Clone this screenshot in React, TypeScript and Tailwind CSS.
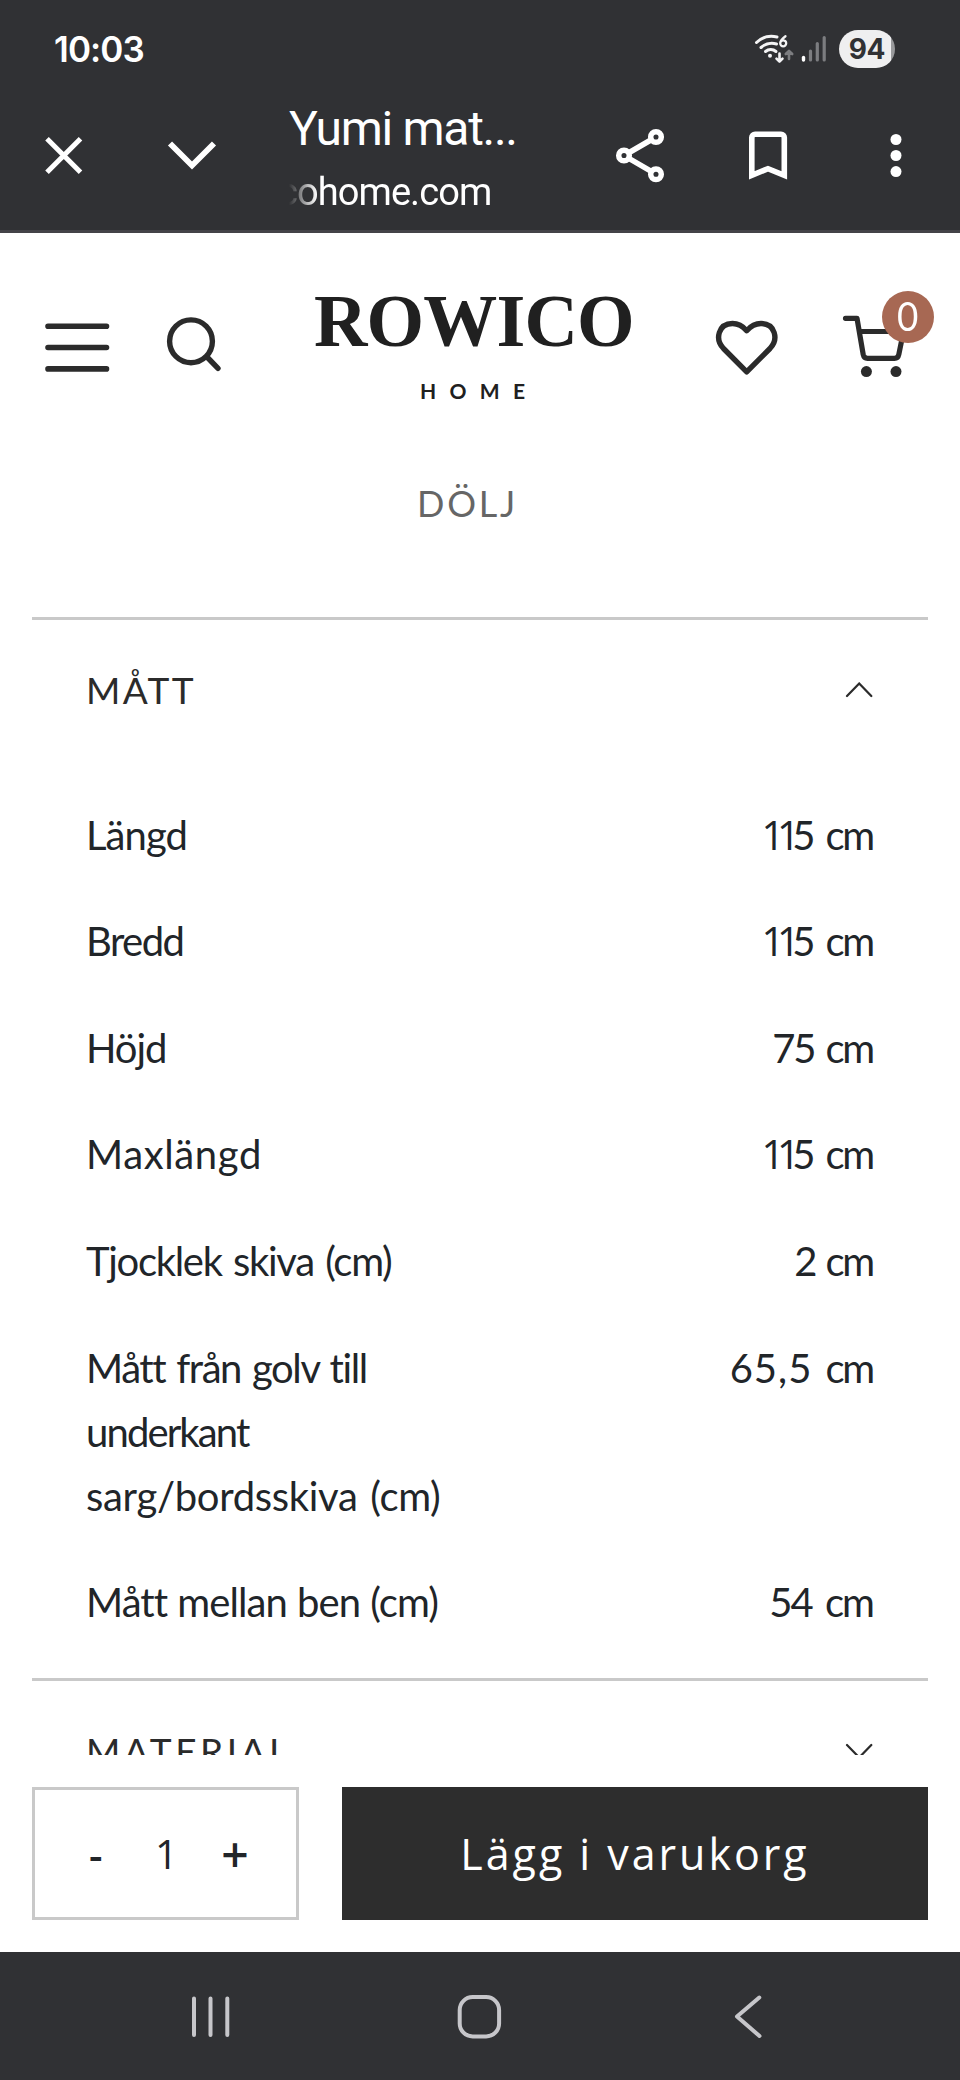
import type { ReactNode } from 'react';

const measurements: { label: ReactNode; labelClass: string; value: ReactNode; valueClass: string }[] = [
  { label: 'Längd', labelClass: 'tracking-[-0.94px]', value: <NarrowOnes />, valueClass: 'tracking-[-2.2px] [word-spacing:4px]' },
  { label: 'Bredd', labelClass: 'tracking-[-1.54px]', value: <NarrowOnes />, valueClass: 'tracking-[-2.2px] [word-spacing:4px]' },
  { label: 'Höjd', labelClass: 'tracking-[-1.07px]', value: '75 cm', valueClass: 'tracking-[-2.2px] [word-spacing:3px]' },
  { label: 'Maxlängd', labelClass: 'tracking-[0.64px]', value: <NarrowOnes />, valueClass: 'tracking-[-2.2px] [word-spacing:4px]' },
  { label: 'Tjocklek skiva (cm)', labelClass: 'tracking-[-1.3px] [word-spacing:2.4px]', value: '2 cm', valueClass: 'tracking-[-2.2px] [word-spacing:2px]' },
  {
    label: (
      <>
        <span className="tracking-[-1.4px] [word-spacing:2.1px]">Mått från golv till</span>
        <br />
        <span className="tracking-[-1.87px]">underkant</span>
        <br />
        <span className="tracking-[-0.3px] [word-spacing:2.7px]">sarg/bordsskiva (cm)</span>
      </>
    ),
    labelClass: '',
    value: (
      <>
        <span className="tracking-[1px]">65,5</span> cm
      </>
    ),
    valueClass: 'tracking-[-2.2px] [word-spacing:5px]',
  },
  { label: 'Mått mellan ben (cm)', labelClass: 'tracking-[-0.9px] [word-spacing:0.7px]', value: '54 cm', valueClass: 'tracking-[-2px] [word-spacing:5px]' },
];

function NarrowOnes() {
  return (
    <>
      <span className="font-['Open_Sans',sans-serif] tracking-[-7.5px]">11</span>5 cm
    </>
  );
}

function StatusBar() {
  return (
    <div className="flex h-[98px] items-center pr-[65px] pl-[54px] text-white">
      <span className="font-[Inter,sans-serif] text-[35px] leading-[44px] font-semibold tracking-[-0.91px]">10:03</span>
      <svg className="ml-auto h-[34px] w-[74px]" viewBox="754 32 74 34" fill="none" strokeLinecap="round">
        <g stroke="#f4f4f5" strokeWidth="3">
          <path d="M756.5 42.5C763 36.3 770 35.3 777 37" />
          <path d="M761 47.5C766 43.3 771 42.5 776.5 44" />
          <path d="M765.5 51.5C768.5 48.9 773 48.9 776 51.5" />
          <path d="M779.5 53.5v8M776.5 58.7l3 3 3-3" strokeWidth="2.6" strokeLinejoin="round" />
        </g>
        <circle cx="770" cy="55.8" r="2" fill="#f4f4f5" />
        <path d="M785.5 36.3C782.5 38.5 780.3 40.8 780.2 43.2M786.2 43.3a3 3 0 1 1-6 0a3 3 0 1 1 6 0Z" stroke="#f4f4f5" strokeWidth="2.3" />
        <path d="M789 59v-8M785.8 54l3.2-3.2 3.2 3.2" stroke="#7c7d80" strokeWidth="2.6" strokeLinejoin="round" />
        <path d="M803.5 57.5v2.5" stroke="#fff" strokeWidth="3.4" />
        <path d="M810.5 51v9M817.3 43.5v16.5M824.2 37.5v22.5" stroke="#7c7d80" strokeWidth="3.2" />
      </svg>
      <span className="ml-[11px] flex h-[38px] w-14 items-center justify-center rounded-full bg-[linear-gradient(to_right,#efeff0_52px,#98999b_52px)] font-[Inter,sans-serif] text-[28px] leading-[38px] font-bold tracking-[-0.2px] text-[#303134]">
        94
      </span>
    </div>
  );
}

function BrowserBar() {
  return (
    <div className="flex h-[132px] items-start text-white">
      <svg className="mt-[26px] ml-11 h-16 w-10 shrink-0" viewBox="44 124 40 64" fill="none" stroke="currentColor" strokeWidth="5">
        <path d="M47 138.800L80.500 172.300M80.500 138.800L47 172.300" />
      </svg>
      <svg className="mt-[26px] ml-[82px] h-16 w-[52px] shrink-0" viewBox="166 124 52 64" fill="none" stroke="currentColor" strokeWidth="5.800">
        <path d="M170 143.500L192 165.500L214 143.500" />
      </svg>
      <div className="mt-[3px] ml-[71px] w-[230px] shrink-0 font-[Roboto,sans-serif]">
        <div className="text-[48px] leading-[56px] tracking-[-1.3px] whitespace-nowrap">Yumi mat...</div>
        <div className="mt-[11px] overflow-hidden [mask-image:linear-gradient(to_right,transparent,black_28px)]">
          <div className="-ml-[11px] text-[38px] leading-[48px] tracking-[-0.92px] whitespace-nowrap">cohome.com</div>
        </div>
      </div>
      <svg className="mt-[26px] ml-[95px] h-16 w-[52px] shrink-0" viewBox="614 124 52 64" fill="none" stroke="currentColor" strokeWidth="5.500">
        <path d="M656 137L624 155.500L656 174.200" />
        <g fill="#303134">
          <circle cx="656" cy="137" r="5.300" />
          <circle cx="624" cy="155.500" r="5.300" />
          <circle cx="656" cy="174.200" r="5.300" />
        </g>
      </svg>
      <svg className="mt-[26px] ml-20 h-16 w-11 shrink-0" viewBox="746 124 44 64" fill="none" stroke="currentColor" strokeWidth="5.600">
        <path d="M751.800 175.300V137.500a3.300 3.300 0 0 1 3.300-3.300H781a3.300 3.300 0 0 1 3.300 3.300V175.300L768 168.700Z" />
      </svg>
      <svg className="mt-[26px] ml-[98px] h-16 w-4 shrink-0" viewBox="888 124 16 64" fill="currentColor">
        <circle cx="896" cy="139.500" r="5.500" />
        <circle cx="896" cy="155.500" r="5.500" />
        <circle cx="896" cy="171.600" r="5.500" />
      </svg>
    </div>
  );
}

function SiteHeader() {
  return (
    <header className="flex h-[228px] items-center text-[#2b2b2b]">
      <svg className="ml-11 h-16 w-[66px] shrink-0" viewBox="44 315 66 64" fill="none" stroke="currentColor" strokeWidth="5.600" strokeLinecap="round">
        <path d="M48 326.300H106.500M48 347.500H106.500M48 368.900H106.500" />
      </svg>
      <svg className="ml-14 h-16 w-[56px] shrink-0" viewBox="166 315 56 64" fill="none" stroke="currentColor" strokeWidth="5.400" strokeLinecap="round">
        <circle cx="191" cy="341.300" r="21.400" />
        <path d="M208 358L218 368.300" />
      </svg>
      <div className="ml-[92px] flex w-[320px] shrink-0 flex-col text-[#202020]">
        <span className="font-['Liberation_Serif',serif] text-[74px] leading-[60px] font-bold tracking-[-0.85px] whitespace-nowrap">ROWICO</span>
        <span className="mt-7 pl-[106px] font-[Lato,sans-serif] text-[21px] leading-6 font-bold tracking-[13.34px]">HOME</span>
      </div>
      <svg className="ml-20 h-16 w-[66px] shrink-0" viewBox="714 315 66 64" fill="none" stroke="currentColor" strokeWidth="5.400" strokeLinejoin="round" strokeLinecap="round">
        <path d="M746.700 371.800L723.500 348.500C714.500 339 718.500 323.700 732.500 323.500C739.500 323.500 743.500 327 746.700 330.700C750 327 754 323.500 761 323.500C775 323.700 779 339 770 348.500Z" />
      </svg>
      <div className="relative ml-[62px] h-16 w-16 shrink-0">
        <svg className="h-16 w-16" viewBox="842 315 64 64" fill="none" stroke="currentColor" strokeWidth="5.200" strokeLinejoin="round" strokeLinecap="round">
          <path d="M845.500 318.300H857L863.200 354.500Q864 358.300 867.500 358.300H894.500Q898 358.300 898.800 354.500L903.500 331.500H860" />
          <g fill="currentColor" stroke="none">
            <circle cx="866.400" cy="371.600" r="5.500" />
            <circle cx="896" cy="371.600" r="5.500" />
          </g>
        </svg>
        <span className="absolute top-[-24px] left-10 flex size-[52px] items-center justify-center rounded-full bg-[#a76853] font-[Lato,sans-serif] text-[40px] leading-[52px] text-white">
          <span className="-mt-[3px] scale-x-[.92]">0</span>
        </span>
      </div>
    </header>
  );
}

function SectionTitle({ text, open, tracking }: { text: string; open: boolean; tracking: string }) {
  return (
    <div className="flex h-[141px] items-center justify-between pr-[55px] pb-px pl-[54px] text-[#2b2b2b]">
      <span className={`text-[37px] leading-[44px] ${tracking}`}>{text}</span>
      <svg className="h-4 w-7" viewBox="0 0 28 16" fill="none" stroke="currentColor" strokeWidth="2.2" strokeLinecap="round">
        <path d={open ? 'M2 14L14.200 1.500L26.300 14' : 'M2 2L14.200 14.500L26.300 2'} />
      </svg>
    </div>
  );
}

export default function App() {
  return (
    <div className="flex h-[2080px] w-[960px] flex-col overflow-hidden bg-white font-[Lato,sans-serif]">
      <div className="shrink-0 border-b-[3px] border-[#444348] bg-[#303134]">
        <StatusBar />
        <BrowserBar />
      </div>

      <div className="flex h-[1522px] shrink-0 flex-col overflow-hidden [&>*]:shrink-0">
        <SiteHeader />
        <button className="mb-[72px] h-[84px] w-full pr-[25px] text-[36px] leading-[44px] tracking-[2.77px] text-[#666]">DÖLJ</button>

        <section className="mx-8 border-t-[3px] border-[#c9c9c9]">
          <SectionTitle text="MÅTT" open tracking="tracking-[2.4px]" />
          <dl className="flex flex-col gap-[42.67px] pt-[41.5px] pr-[55px] pb-[43.5px] pl-[54px] text-[40px] leading-[64px] text-[#212529]">
            {measurements.map((m, i) => (
              <div key={i} className="flex justify-between whitespace-nowrap">
                <dt className={m.labelClass}>{m.label}</dt>
                <dd className={m.valueClass}>{m.value}</dd>
              </div>
            ))}
          </dl>
        </section>

        <section className="mx-8 border-t-[3px] border-[#c9c9c9]">
          <SectionTitle text="MATERIAL" open={false} tracking="tracking-[3.5px]" />
        </section>
      </div>

      <div className="flex h-[197px] shrink-0 gap-[43px] px-8 pt-8">
        <div className="flex h-[133px] w-[267px] shrink-0 items-center border-[3px] border-[#c9c9c9] font-['Open_Sans',sans-serif] text-[#212529]">
          <button className="ml-[54px] w-4 text-left text-[42px] leading-[60px] font-semibold">-</button>
          <span className="ml-[50px] w-6 text-[40px] leading-[60px]">1</span>
          <button className="ml-[42px] w-7 text-[48px] leading-[60px] font-semibold">+</button>
        </div>
        <button className="h-[133px] w-[586px] bg-[#2d2d2d] font-['Open_Sans',sans-serif] text-[43px] leading-[60px] tracking-[2.96px] text-white">
          Lägg i varukorg
        </button>
      </div>

      <nav className="flex h-32 shrink-0 items-center bg-[#303134] text-[#c6c6ca]">
        <svg className="ml-[188px] h-12 w-11" viewBox="188 1992 44 48" stroke="currentColor" strokeWidth="4" strokeLinecap="round">
          <path d="M194 1998.500V2035M210.500 1998.500V2035M227.300 1998.500V2035" />
        </svg>
        <svg className="ml-[223px] h-12 w-12" viewBox="455 1992 48 48" fill="none" stroke="currentColor" strokeWidth="4">
          <rect x="459.700" y="1997" width="39.400" height="39.400" rx="13" />
        </svg>
        <svg className="ml-[229px] h-12 w-8" viewBox="732 1992 32 48" fill="none" stroke="currentColor" strokeWidth="4" strokeLinecap="round" strokeLinejoin="round">
          <path d="M759.300 1997.500L737 2016.500L759.500 2036" />
        </svg>
      </nav>
    </div>
  );
}
